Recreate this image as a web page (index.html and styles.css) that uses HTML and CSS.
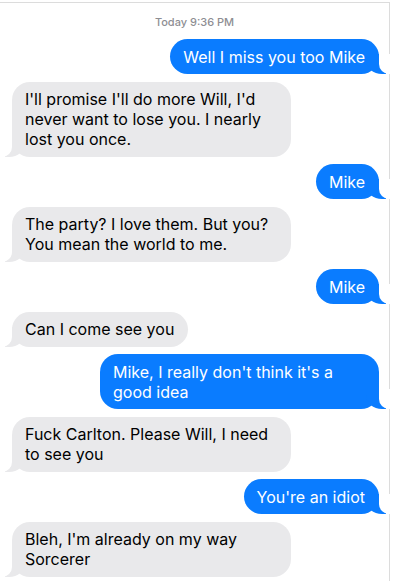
FILE: index.html
```html
<!DOCTYPE html>
<html>
<head>
<meta charset="utf-8">
<link rel="stylesheet" href="styles.css">
</head>
<body>
<div class="frame">
  <div class="stamp">Today 9:36 PM</div>
  <div class="thread">
    <div class="msg sent">Well I miss you too Mike</div>
    <div class="msg recv">I'll promise I'll do more Will, I'd never want to lose you. I nearly lost you once.</div>
    <div class="msg sent">Mike</div>
    <div class="msg recv">The party? I love them. But you? You mean the world to me.</div>
    <div class="msg sent">Mike</div>
    <div class="msg recv">Can I come see you</div>
    <div class="msg sent">Mike, I really don't think it's a good idea</div>
    <div class="msg recv">Fuck Carlton. Please Will, I need to see you</div>
    <div class="msg sent">You're an idiot</div>
    <div class="msg recv">Bleh, I'm already on my way Sorcerer</div>
  </div>
</div>
</body>
</html>
```
FILE: styles.css
```css
html, body {
  margin: 0;
  padding: 0;
  background: #fff;
  overflow: hidden;
}
.frame {
  margin-top: 2px;
  width: 389px;
  height: 600px;
  border-top: 1px solid #dcdcdc;
  border-right: 1px solid #dcdcdc;
  font-family: Inter, "Noto Sans", sans-serif;
}
.stamp {
  text-align: center;
  font-size: 11px;
  line-height: 13px;
  font-weight: 500;
  color: #8e8e93;
  padding-top: 13px;
  margin-bottom: 10px;
}
.thread {
  display: flex;
  flex-direction: column;
  gap: 7.5px;
  padding: 0 10px 0 12px;
}
.msg {
  position: relative;
  max-width: 279px;
  box-sizing: border-box;
  padding: 7.5px 14px 7.5px 13px;
  font-size: 16px;
  line-height: 20px;
  border-radius: 18px;
}
.sent {
  align-self: flex-end;
  background: #0a7cff;
  color: #fff;
}
.recv {
  align-self: flex-start;
  background: #e9e9eb;
  color: #000;
}
.sent::before, .sent::after, .recv::before, .recv::after {
  content: "";
  position: absolute;
  bottom: 0;
  height: 20px;
}
.sent::before {
  right: -7px;
  width: 20px;
  background: #0a7cff;
  border-bottom-left-radius: 16px 14px;
}
.sent::after {
  right: -26px;
  width: 26px;
  background: #fff;
  border-bottom-left-radius: 10px;
}
.recv::before {
  left: -7px;
  width: 20px;
  background: #e9e9eb;
  border-bottom-right-radius: 16px 14px;
}
.recv::after {
  left: -26px;
  width: 26px;
  background: #fff;
  border-bottom-right-radius: 10px;
}
```
